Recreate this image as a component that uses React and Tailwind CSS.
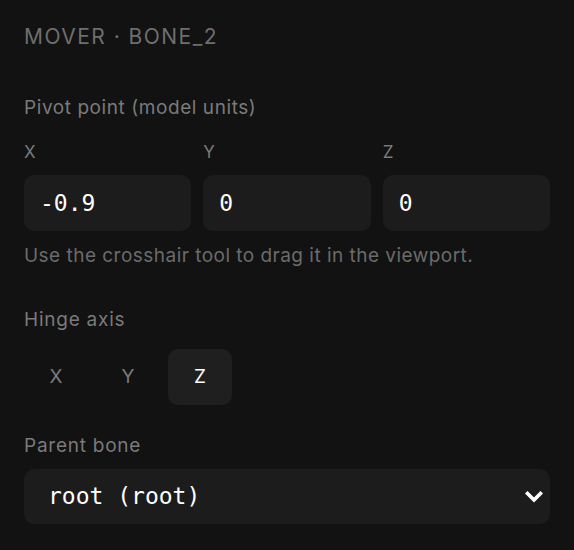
export default function App() {
  const mono = { fontFamily: '"DejaVu Sans Mono", "Liberation Mono", monospace' };
  const fields = [
    { axis: "X", value: "-0.9" },
    { axis: "Y", value: "0" },
    { axis: "Z", value: "0" },
  ];
  const axes = ["X", "Y", "Z"];
  const active = "Z";

  return (
    <div
      className="w-[574px] h-[550px] bg-[#121212] px-6 pt-[23px] overflow-hidden"
      style={{ fontFamily: 'Inter, "Noto Sans", sans-serif' }}
    >
      <div className="text-[21px] leading-[28px] tracking-[0.07em] text-[#6e6e6e]">
        MOVER · BONE_2
      </div>

      <div className="mt-[43px] text-[19px] leading-[28px] tracking-[0.03em] text-[#7a7a7a]">
        Pivot point (model units)
      </div>

      <div className="mt-[18px] grid grid-cols-3 gap-3">
        {fields.map((f) => (
          <div key={f.axis} className="flex flex-col">
            <div className="text-[17px] leading-[24px] text-[#7a7a7a]">{f.axis}</div>
            <div className="mt-[11px] h-[56px] rounded-[10px] bg-[#1c1c1c] flex items-center pl-4">
              <span className="text-[23px] text-white" style={mono}>
                {f.value}
              </span>
            </div>
          </div>
        ))}
      </div>

      <div className="mt-[12px] text-[19px] leading-[26px] tracking-[0.025em] text-[#6b6b6b]">
        Use the crosshair tool to drag it in the viewport.
      </div>

      <div className="mt-[37px] text-[19px] leading-[28px] tracking-[0.04em] text-[#7a7a7a]">
        Hinge axis
      </div>

      <div className="mt-[15px] flex gap-2">
        {axes.map((a) => (
          <div
            key={a}
            className={
              a === active
                ? "w-16 h-14 rounded-[10px] bg-[#1f1f1f] flex items-center justify-center text-[19px] text-white"
                : "w-16 h-14 rounded-[10px] flex items-center justify-center text-[19px] text-[#7a7a7a]"
            }
          >
            {a}
          </div>
        ))}
      </div>

      <div className="mt-[27px] text-[19px] leading-[28px] tracking-[0.04em] text-[#7a7a7a]">
        Parent bone
      </div>

      <div className="mt-[9px] h-[55px] rounded-[10px] bg-[#1c1c1c] flex items-center justify-between pl-[24px] pr-[7px]">
        <span className="text-[23px] text-white" style={mono}>
          root (root)
        </span>
        <svg width="18" height="12" viewBox="0 0 18 12" fill="none">
          <path d="M2.5 2.5 L9 9 L15.5 2.5" stroke="white" strokeWidth="3.6" strokeLinecap="square" />
        </svg>
      </div>
    </div>
  );
}
